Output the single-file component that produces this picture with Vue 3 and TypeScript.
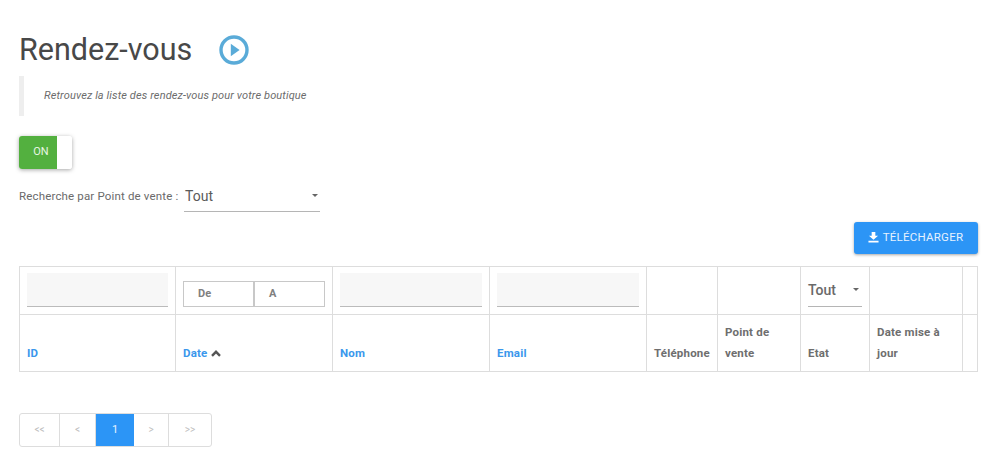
<script setup lang="ts">
const pages = [
  { label: '<<', w: 40 },
  { label: '<', w: 36 },
  { label: '1', w: 38, active: true },
  { label: '>', w: 35 },
  { label: '>>', w: 42 },
]
const widths = [156, 157, 157, 157, 71, 83, 69, 93, 15]
</script>

<template>
  <main class="page">
    <header class="title-row">
      <h1>Rendez-vous</h1>
      <svg class="play" width="32" height="32" viewBox="0 0 32 32" aria-hidden="true">
        <circle cx="16" cy="16" r="13" fill="none" stroke="#5aabd8" stroke-width="3.4" />
        <path d="M12.8 9.8 L21.6 16 L12.8 22.2 Z" fill="#5aabd8" />
      </svg>
    </header>

    <blockquote class="note">Retrouvez la liste des rendez-vous pour votre boutique</blockquote>

    <div class="toggle">
      <span class="toggle-on">ON</span>
      <span class="toggle-handle"></span>
    </div>

    <div class="search">
      <label>Recherche par Point de vente :</label>
      <div class="select wide">
        <span>Tout</span>
        <i class="caret"></i>
      </div>
    </div>

    <div class="actions">
      <button class="download" type="button">
        <svg width="11" height="12" viewBox="0 0 12 12" aria-hidden="true">
          <path d="M4 0.5 H8 V4.5 H11 L6 9 L1 4.5 H4 Z M0.5 10 H11.5 V12 H0.5 Z" fill="#fff" />
        </svg>
        TÉLÉCHARGER
      </button>
    </div>

    <table class="grid">
      <colgroup>
        <col v-for="(w, i) in widths" :key="i" :style="{ width: w + 'px' }" />
      </colgroup>
      <thead>
        <tr class="filters">
          <td><div class="text-filter"></div></td>
          <td>
            <div class="range">
              <span>De</span>
              <span>A</span>
            </div>
          </td>
          <td><div class="text-filter"></div></td>
          <td><div class="text-filter"></div></td>
          <td></td>
          <td></td>
          <td>
            <div class="select state">
              <span>Tout</span>
              <i class="caret"></i>
            </div>
          </td>
          <td></td>
          <td></td>
        </tr>
        <tr class="heads">
          <th class="link">ID</th>
          <th class="link">
            Date<svg class="chevron" width="10" height="7" viewBox="0 0 10 7" aria-hidden="true">
              <path d="M1 5.8 L5 1.8 L9 5.8" fill="none" stroke="#555" stroke-width="2.4" />
            </svg>
          </th>
          <th class="link">Nom</th>
          <th class="link">Email</th>
          <th>Téléphone</th>
          <th>Point de vente</th>
          <th>Etat</th>
          <th>Date mise à jour</th>
          <th></th>
        </tr>
      </thead>
    </table>

    <nav class="pager">
      <span
        v-for="p in pages"
        :key="p.label"
        class="page-item"
        :class="{ active: p.active }"
        :style="{ width: p.w + 'px' }"
      >{{ p.label }}</span>
    </nav>
  </main>
</template>

<style>
html, body { margin: 0; background: #fff; }
</style>

<style scoped>
.page {
  box-sizing: border-box;
  width: 985px;
  height: 467px;
  padding: 0 7px 0 19px;
  overflow: hidden;
  font-family: Roboto, "Liberation Sans", sans-serif;
  color: #555;
}
.title-row {
  display: flex;
  align-items: center;
  box-sizing: border-box;
  height: 76px;
  padding-top: 23px;
}
h1 {
  margin: 0;
  font-size: 30.5px;
  font-weight: 400;
  color: #484848;
  line-height: 36px;
}
.play { margin-left: 26px; margin-top: 1px; }
.note {
  box-sizing: border-box;
  height: 40px;
  margin: 0;
  padding: 0 0 0 20px;
  border-left: 5px solid #eee;
  font-size: 11px;
  font-style: italic;
  letter-spacing: 0.12px;
  line-height: 39px;
  color: #6c6c6c;
}
.toggle {
  display: flex;
  width: 53px;
  height: 33px;
  margin-top: 20px;
  border-radius: 3px;
  overflow: hidden;
  box-shadow: 0 1px 4px rgba(0, 0, 0, 0.35);
}
.toggle-on {
  flex: 1;
  padding-left: 6px;
  background: #53b03f;
  color: #e8f5e4;
  font-size: 11px;
  line-height: 31px;
  text-align: center;
}
.toggle-handle { width: 15px; background: #fff; }
.search {
  display: flex;
  align-items: flex-start;
  margin-top: 15px;
}
.search label {
  font-size: 11.5px;
  line-height: 24px;
  color: #6a6a6a;
  letter-spacing: 0.16px;
  width: 165px;
  white-space: nowrap;
}
.select {
  position: relative;
  box-sizing: border-box;
  border-bottom: 1px solid #b5b5b5;
  color: #5a5a5a;
}
.wide {
  width: 136px;
  height: 28px;
  padding-left: 1px;
  font-size: 14px;
  line-height: 24px;
}
.caret {
  position: absolute;
  right: 2px;
  top: 10px;
  border-left: 3.5px solid transparent;
  border-right: 3.5px solid transparent;
  border-top: 3.5px solid #666;
}
.actions {
  display: flex;
  justify-content: flex-end;
  margin-top: 10px;
}
.download {
  display: flex;
  align-items: center;
  justify-content: center;
  gap: 4px;
  box-sizing: border-box;
  width: 124px;
  height: 32px;
  padding: 0 1px 3px 0;
  border: 0;
  border-radius: 3px;
  background: #2c95f6;
  color: #e6f2fe;
  font: 400 11.5px Roboto, sans-serif;
  letter-spacing: 0.02em;
  box-shadow: 0 1px 3px rgba(0, 0, 0, 0.35);
}
.grid {
  width: 959px;
  margin-top: 12px;
  border-collapse: collapse;
  table-layout: fixed;
  font-size: 11.5px;
  letter-spacing: 0.2px;
}
.grid td, .grid th {
  border: 1px solid #dddddd;
  padding: 0 7px;
}
.filters { height: 48px; }
.filters td { vertical-align: bottom; padding-bottom: 7px; }
.text-filter {
  height: 33px;
  background: #f7f7f7;
  border-bottom: 1px solid #bbb;
}
.range {
  display: flex;
  height: 26px;
  box-sizing: border-box;
  border: 1px solid #c8c8c8;
  font-weight: 700;
  font-size: 11px;
  line-height: 24px;
  color: #808080;
}
.range span { flex: 1; padding-left: 14px; }
.range span + span { border-left: 2px solid #c8c8c8; }
.state {
  height: 33px;
  font-size: 14px;
  font-weight: 500;
  line-height: 32px;
  letter-spacing: 0;
  color: #6a6a6a;
}
.state .caret { top: 14px; right: 3px; }
.heads { height: 57px; }
.heads th {
  vertical-align: bottom;
  text-align: left;
  font-weight: 700;
  line-height: 21px;
  padding-bottom: 7px;
  color: #6e6e6e;
}
.heads th.link { color: #3a97ec; }
.chevron { margin-left: 3px; }
.pager {
  display: flex;
  width: 193px;
  height: 34px;
  margin-top: 41px;
  box-sizing: border-box;
  border: 1px solid #dddddd;
  border-radius: 3px;
}
.page-item {
  box-sizing: border-box;
  flex: none;
  border-right: 1px solid #dddddd;
  font-size: 10px;
  line-height: 31px;
  text-align: center;
  color: #c0c0c0;
}
.page-item:last-child { border-right: 0; }
.page-item.active {
  background: #2c95f6;
  color: #e6f2fe;
  font-size: 11px;
  border-right: 0;
}
</style>
